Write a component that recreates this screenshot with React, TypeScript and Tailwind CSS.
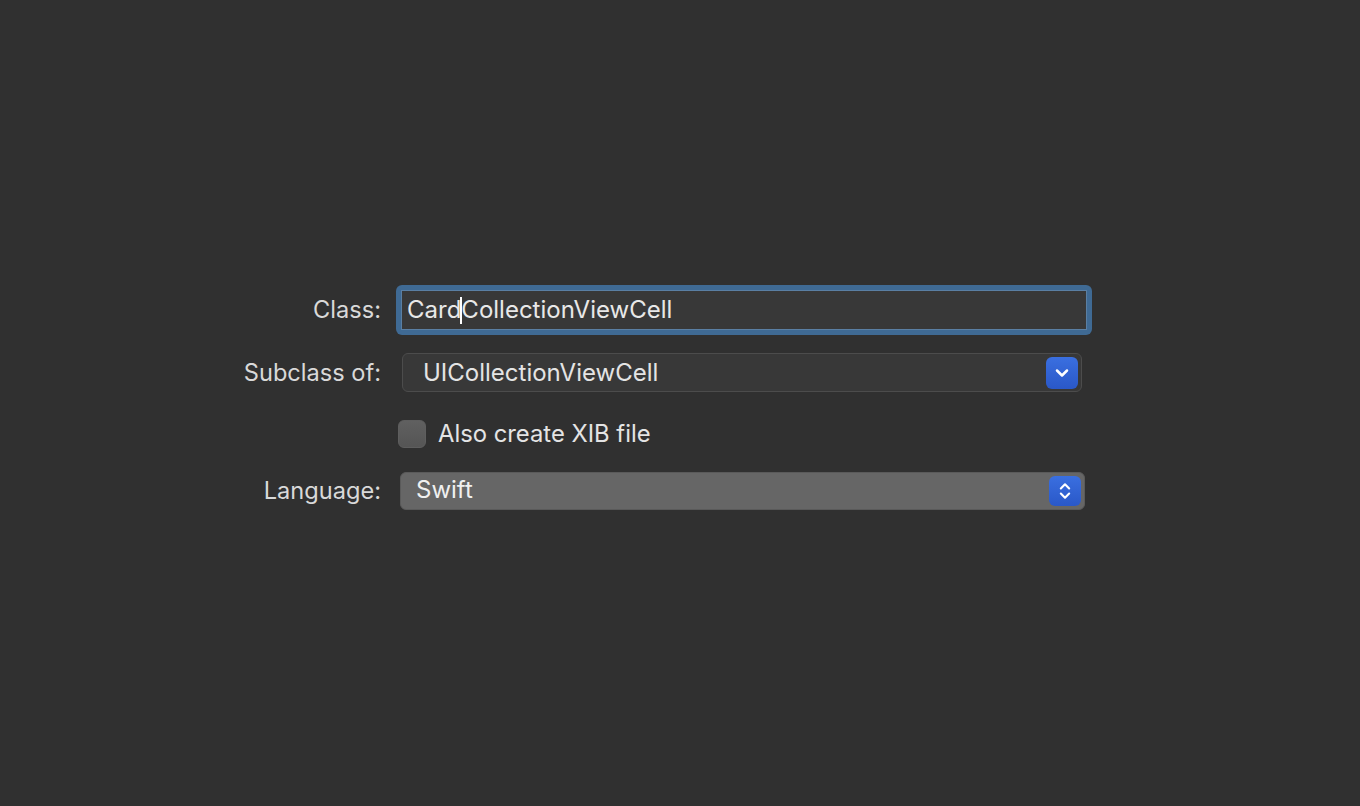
import { ChevronDown, ChevronsUpDown } from 'lucide-react';

const font = { fontFamily: 'Inter, "Noto Sans", sans-serif' };

function Label({ children }: { children: React.ReactNode }) {
  return <div className="w-[382px] shrink-0 pr-[1px] text-right text-[23.6px] text-[#d9d9d9]">{children}</div>;
}

export default function App() {
  return (
    <div className="min-h-[806px] w-full bg-[#303030]" style={font}>
      <div className="flex flex-col pt-[285px]">
        {/* Class */}
        <div className="flex h-[50px] items-center">
          <Label>Class:</Label>
          <div className="ml-[14px] h-[50px] w-[696px] rounded-[6px] bg-[#3f6a94] p-[5px]">
            <div className="flex h-full items-center border border-[#5a7fa3] bg-[#383838] pl-[5px] text-[24px] text-[#e8e8e8]">
              <span>Card</span>
              <span className="mx-[-1px] inline-block h-[27px] w-[2px] bg-white" />
              <span>CollectionViewCell</span>
            </div>
          </div>
        </div>

        {/* Subclass */}
        <div className="mt-[18px] flex h-[39px] items-center">
          <Label>Subclass of:</Label>
          <div className="ml-[20px] flex h-[39px] w-[680px] items-center justify-between rounded-[6px] border border-[#4c4c4c] bg-[#383838] pl-[20px] pr-[3px] text-[24px] text-[#e4e4e4]">
            <span>UICollectionViewCell</span>
            <div className="flex h-[32px] w-[32px] items-center justify-center rounded-[6px] bg-gradient-to-b from-[#3a6fe0] to-[#2a58c8]">
              <ChevronDown size={20} strokeWidth={3} className="text-white" />
            </div>
          </div>
        </div>

        {/* Checkbox */}
        <div className="mt-[28px] flex h-[28px] items-center">
          <div className="ml-[398px] h-[28px] w-[28px] rounded-[6px] border border-[#5e5e5e] bg-gradient-to-b from-[#606060] to-[#555555]" />
          <span className="ml-[12px] text-[23.8px] text-[#e4e4e4]">Also create XIB file</span>
        </div>

        {/* Language */}
        <div className="mt-[24px] flex h-[38px] items-center">
          <Label>Language:</Label>
          <div className="ml-[18px] flex h-[38px] w-[685px] items-center justify-between rounded-[6px] border border-[#5a5a5a] bg-[#666666] pl-[15px] pr-[3px] text-[24px] text-[#f0f0f0]">
            <span className="-mt-[3px]">Swift</span>
            <div className="flex h-[30px] w-[32px] items-center justify-center rounded-[6px] bg-gradient-to-b from-[#3a6fe0] to-[#2a58c8]">
              <ChevronsUpDown size={20} strokeWidth={2.5} className="text-white" />
            </div>
          </div>
        </div>
      </div>
    </div>
  );
}
